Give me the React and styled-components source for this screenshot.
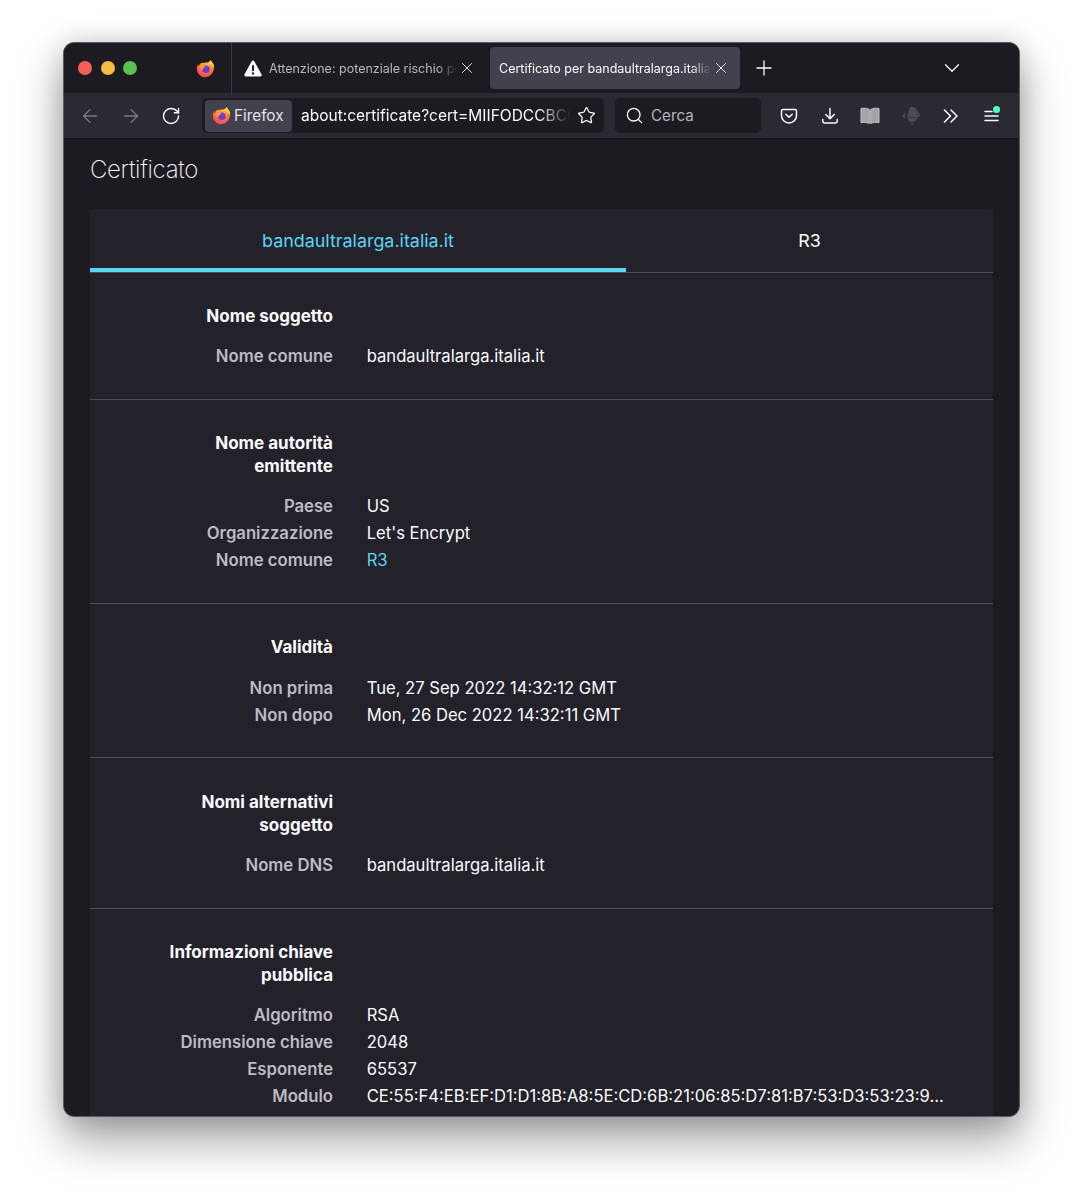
import { ArrowLeft, ArrowRight, RotateCw, X, Plus, ChevronDown, Star, Search } from 'lucide-react';
import styled, { createGlobalStyle } from 'styled-components';

const GlobalStyle = createGlobalStyle`
    html, body {
        margin: 0;
        background: #fff;
    }
    body {
        font-family: Inter, "Noto Sans", "Liberation Sans", sans-serif;
        -webkit-font-smoothing: antialiased;
    }
`;

const Page = styled.div`
    height: 1200px;
    padding: 42px 63px 0;
    box-sizing: border-box;
    overflow: hidden;
`;

const Window = styled.div`
    width: 957px;
    height: 1075px;
    box-sizing: border-box;
    display: flex;
    flex-direction: column;
    overflow: hidden;
    background: #1c1b22;
    border: 1px solid #5c5c60;
    border-radius: 11px;
    box-shadow: 0 22px 46px rgba(0, 0, 0, 0.38), 0 0 26px rgba(0, 0, 0, 0.14);
`;

const TabStrip = styled.div`
    height: 50px;
    flex: none;
    display: flex;
    align-items: center;
    background: #1c1b22;
`;

const Lights = styled.div`
    width: 132px;
    flex: none;
    display: flex;
    gap: 8.5px;
    padding-left: 14px;
    box-sizing: border-box;
    align-items: center;
`;

const Light = styled.span`
    width: 14px;
    height: 14px;
    border-radius: 50%;
    background: ${(p) => p.$color};
`;

const StripLogo = styled.div`
    width: 35px;
    flex: none;
    display: flex;
    align-items: center;
`;

const Divider = styled.div`
    width: 1px;
    height: 50px;
    flex: none;
    background: #3e3d45;
`;

const Tab = styled.div`
    width: ${(p) => (p.$active ? '250px' : '249px')};
    height: 42px;
    flex: none;
    display: flex;
    align-items: center;
    box-sizing: border-box;
    padding: ${(p) => (p.$active ? '0 10px 0 9px' : '0 5px 0 12px')};
    margin-left: ${(p) => (p.$active ? '9px' : '0')};
    border-radius: 4px;
    font-size: 12.5px;
    color: ${(p) => (p.$active ? '#fbfbfe' : '#b8b8bd')};
    background: ${(p) => (p.$active ? '#42414d' : 'transparent')};
`;

const TabText = styled.span`
    flex: 1;
    min-width: 0;
    white-space: nowrap;
    overflow: hidden;
    margin-left: ${(p) => (p.$indented ? '7px' : '0')};
    mask-image: linear-gradient(to left, transparent 0, #000 20px);
`;

const TabClose = styled(X)`
    width: 18px;
    height: 18px;
    flex: none;
    margin-left: 1px;
    color: #e8e8ec;
`;

const StripButton = styled.div`
    flex: none;
    display: flex;
    align-items: center;
    color: #fbfbfe;
    margin-left: ${(p) => p.$left}px;
`;

const Toolbar = styled.div`
    height: 46px;
    flex: none;
    display: flex;
    align-items: center;
    box-sizing: border-box;
    background: #2b2a33;
    border-bottom: 1px solid #111014;
`;

const NavIcons = styled.div`
    width: 138px;
    flex: none;
    display: flex;
    align-items: center;
    gap: 19px;
    padding-left: 15px;
    box-sizing: border-box;
`;

const NavButton = styled.div`
    display: flex;
    color: ${(p) => (p.$dim ? '#7c7c84' : '#fbfbfe')};
`;

const UrlBar = styled.div`
    width: 402px;
    height: 35px;
    flex: none;
    display: flex;
    align-items: center;
    box-sizing: border-box;
    padding: 0 8px 0 3px;
    background: #1c1b22;
    border-radius: 5px;
`;

const Identity = styled.div`
    width: 87px;
    height: 32px;
    flex: none;
    display: flex;
    align-items: center;
    gap: 3px;
    box-sizing: border-box;
    padding-left: 7px;
    background: #42414d;
    border-radius: 4px;
    font-size: 15.3px;
    color: #e4e4e8;
`;

const UrlText = styled.div`
    flex: 1;
    min-width: 0;
    margin: 0 6px 0 9px;
    white-space: nowrap;
    overflow: hidden;
    font-size: 15.5px;
    color: #fbfbfe;
    mask-image: linear-gradient(to left, transparent 0, #000 34px);
`;

const SearchBox = styled.div`
    width: 146px;
    height: 35px;
    flex: none;
    display: flex;
    align-items: center;
    gap: 7px;
    box-sizing: border-box;
    margin-left: 11px;
    padding-left: 10px;
    background: #1c1b22;
    border-radius: 5px;
    font-size: 15.2px;
    color: #b4b4b9;
`;

const ToolIcons = styled.div`
    flex: 1;
    display: flex;
    align-items: center;
    padding-left: 7.7px;
    color: #fbfbfe;
`;

const ToolSlot = styled.div`
    position: relative;
    width: 40.6px;
    flex: none;
    display: flex;
    justify-content: center;
`;

const Badge = styled.span`
    position: absolute;
    top: -3px;
    right: 12px;
    width: 7px;
    height: 7px;
    border-radius: 50%;
    background: #54ffbd;
`;

const Content = styled.div`
    flex: 1;
    min-height: 0;
    overflow: hidden;
    padding: 0 26px;
`;

const Title = styled.h1`
    margin: 0;
    padding: 14px 0 22px;
    font-size: 24px;
    line-height: 34px;
    font-weight: 200;
    letter-spacing: -0.3px;
    color: #fbfbfe;
`;

const Card = styled.div`
    background: #23222b;
    border-radius: 4px 4px 0 0;
`;

const CertTabs = styled.div`
    display: flex;
    height: 63.5px;
    border-bottom: 1px solid #4e4d55;
    box-sizing: border-box;
`;

const CertTab = styled.div`
    flex: ${(p) => (p.$active ? '0 0 536px' : '1')};
    height: ${(p) => (p.$active ? '63px' : '59px')};
    display: flex;
    align-items: center;
    justify-content: center;
    padding-top: 4px;
    box-sizing: border-box;
    font-size: 17.9px;
    color: ${(p) => (p.$active ? '#5cd4f2' : '#fbfbfe')};
    border-bottom: ${(p) => (p.$active ? '4px solid #5cd4f2' : 'none')};
`;

const Section = styled.section`
    padding: 32.2px 0 28.6px;
    border-bottom: 1px solid #4e4d55;
    &:last-child {
        border-bottom: none;
    }
`;

const Heading = styled.div`
    width: 243px;
    margin-bottom: 15.5px;
    text-align: right;
    font-size: 17px;
    line-height: 23px;
    font-weight: 700;
    color: #fbfbfe;
`;

const Row = styled.div`
    display: grid;
    grid-template-columns: 243px 1fr;
    column-gap: 33.7px;
    line-height: 27px;
`;

const Label = styled.div`
    text-align: right;
    font-size: 16.7px;
    font-weight: 600;
    color: #bcbcc3;
`;

const Value = styled.div`
    white-space: nowrap;
    font-size: 16.6px;
    color: ${(p) => (p.$link ? '#5cd4f2' : '#fbfbfe')};
`;

const FirefoxLogo = ({ size = 19 }) => (
    <svg width={size} height={size} viewBox="0 0 24 24" style={{ flex: 'none' }}>
        <defs>
            <radialGradient id="ffBody" cx="0.6" cy="0.25" r="0.9">
                <stop offset="0" stopColor="#ffc23a" />
                <stop offset="0.5" stopColor="#ff7139" />
                <stop offset="1" stopColor="#e5356f" />
            </radialGradient>
        </defs>
        <path d="M18.500 1c.6 2.200 3.600 5 4.200 8.600.7 6.400-4 13.400-10.900 13.400C5.800 23 1 18.200 1 12.200c0-2 .5-4 1.600-5.700.2 1 .6 1.700 1.200 2.200C4.500 6 6.500 4.600 8.500 4.700 10.800 4.800 17 5 18.500 1z" fill="url(#ffBody)" />
        <path d="M18.500 1c-.3 2.500-2 3.500-3.600 4.600 3.500.3 6 2.500 6.700 6 .5-1 1.100-2.300 1.100-3C22.200 5.500 19.200 3.500 18.500 1z" fill="#ffd43a" />
        <circle cx="12.500" cy="13" r="4.800" fill="#6a3fd0" />
        <path d="M4 9c2-2.800 5-3.300 7.500-2.800-1.700.6-3 1.400-3.300 2.800 1.500-.2 3 .1 3.800 1.300-2.200 0-3.800 1.200-3.400 3.400-2.200-.5-4.200-2-4.600-4.700z" fill="#ff9a2e" />
    </svg>
);

const WarningIcon = () => (
    <svg width="18" height="17" viewBox="0 0 18 17" style={{ flex: 'none' }}>
        <path d="M9 .6c.6 0 1.100.3 1.400.8l7.100 12.800c.6 1.100-.1 2.300-1.300 2.300H1.800C.6 16.500-.1 15.300.5 14.200L7.600 1.400C7.900.9 8.400.6 9 .6z" fill="#fbfbfe" />
        <rect x="8" y="5" width="2" height="6.200" rx="1" fill="#1c1b22" />
        <circle cx="9" cy="13.400" r="1.200" fill="#1c1b22" />
    </svg>
);

const PocketIcon = () => (
    <svg width="18" height="18" viewBox="0 0 18 18" fill="none" stroke="currentColor" strokeWidth="1.500" strokeLinecap="round" strokeLinejoin="round">
        <path d="M3 2.500h12c.9 0 1.500.6 1.500 1.500v4.500a7.500 7.500 0 0 1-15 0V4c0-.9.6-1.500 1.500-1.500z" />
        <path d="M5.800 7.200 9 10.200l3.200-3" />
    </svg>
);

const DownloadIcon = () => (
    <svg width="18" height="18" viewBox="0 0 18 18" fill="none" stroke="currentColor" strokeWidth="1.500" strokeLinecap="round" strokeLinejoin="round">
        <path d="M9 1.500v10M4.800 7.500 9 11.700l4.200-4.200" />
        <path d="M1.800 12.500v1.800c0 1 .7 1.700 1.700 1.700h11c1 0 1.700-.7 1.700-1.700v-1.800" />
    </svg>
);

const ReaderIcon = () => (
    <svg width="20" height="18" viewBox="0 0 20 18">
        <path d="M1 1.500c3-.6 6-.4 8.300 1v14c-2.300-1.200-5.300-1.400-8.300-.8z" fill="#a4a4a8" stroke="#c4c4c8" strokeWidth="1" strokeLinejoin="round" />
        <path d="M19 1.500c-3-.6-6-.4-8.300 1v14c2.300-1.200 5.300-1.400 8.300-.8z" fill="#a4a4a8" stroke="#c4c4c8" strokeWidth="1" strokeLinejoin="round" />
    </svg>
);

const ExtensionIcon = () => (
    <svg width="20" height="20" viewBox="0 0 20 20" fill="#4c4c52">
        <path d="M9 1h4.500L19 9l-1 2.500H6z" />
        <path d="M6.500 12H17l-3.500 3.500H8z" />
        <path d="M4.500 6.500 1 10l3 3z" />
        <path d="M9.500 16.500h3.500L11 19z" />
    </svg>
);

const DoubleChevronIcon = () => (
    <svg width="16" height="14" viewBox="0 0 16 14" fill="none" stroke="currentColor" strokeWidth="1.500" strokeLinecap="round" strokeLinejoin="round">
        <path d="M1.500 1 7.500 7l-6 6M8 1l6 6-6 6" />
    </svg>
);

const MenuIcon = () => (
    <svg width="15" height="14" viewBox="0 0 15 14" fill="none" stroke="currentColor" strokeWidth="1.500" strokeLinecap="round">
        <path d="M1 2.500h7M1 7h13M1 11.500h13" />
    </svg>
);

const App = () => {
    return (
        <Page>
            <GlobalStyle />
            <Window>
                <TabStrip>
                    <Lights>
                        <Light $color="#f25f58" />
                        <Light $color="#f8bd3f" />
                        <Light $color="#57c353" />
                    </Lights>
                    <StripLogo><FirefoxLogo /></StripLogo>
                    <Divider />
                    <Tab>
                        <WarningIcon />
                        <TabText $indented>Attenzione: potenziale rischio per</TabText>
                        <TabClose strokeWidth={1.3} />
                    </Tab>
                    <Tab $active>
                        <TabText>Certificato per bandaultralarga.italia.it</TabText>
                        <TabClose strokeWidth={1.3} />
                    </Tab>
                    <StripButton $left={12}><Plus size={24} strokeWidth={1.3} /></StripButton>
                    <StripButton $left={163}><ChevronDown size={26} strokeWidth={1.2} /></StripButton>
                </TabStrip>
                <Toolbar>
                    <NavIcons>
                        <NavButton $dim><ArrowLeft size={22} strokeWidth={1.4} /></NavButton>
                        <NavButton $dim><ArrowRight size={22} strokeWidth={1.4} /></NavButton>
                        <NavButton><RotateCw size={20} strokeWidth={1.7} /></NavButton>
                    </NavIcons>
                    <UrlBar>
                        <Identity><FirefoxLogo />Firefox</Identity>
                        <UrlText>about:certificate?cert=MIIFODCCBCCg</UrlText>
                        <Star size={19} strokeWidth={1.6} color="#fbfbfe" />
                    </UrlBar>
                    <SearchBox><Search size={19} strokeWidth={1.7} color="#fbfbfe" />Cerca</SearchBox>
                    <ToolIcons>
                        <ToolSlot><PocketIcon /></ToolSlot>
                        <ToolSlot><DownloadIcon /></ToolSlot>
                        <ToolSlot><ReaderIcon /></ToolSlot>
                        <ToolSlot><ExtensionIcon /></ToolSlot>
                        <ToolSlot><DoubleChevronIcon /></ToolSlot>
                        <ToolSlot><MenuIcon /><Badge /></ToolSlot>
                    </ToolIcons>
                </Toolbar>
                <Content>
                    <Title>Certificato</Title>
                    <Card>
                        <CertTabs>
                            <CertTab $active>bandaultralarga.italia.it</CertTab>
                            <CertTab>R3</CertTab>
                        </CertTabs>
                        <Section>
                            <Heading>Nome soggetto</Heading>
                            <Row><Label>Nome comune</Label><Value>bandaultralarga.italia.it</Value></Row>
                        </Section>
                        <Section>
                            <Heading>Nome autorità<br />emittente</Heading>
                            <Row><Label>Paese</Label><Value>US</Value></Row>
                            <Row><Label>Organizzazione</Label><Value>Let's Encrypt</Value></Row>
                            <Row><Label>Nome comune</Label><Value $link>R3</Value></Row>
                        </Section>
                        <Section>
                            <Heading>Validità</Heading>
                            <Row><Label>Non prima</Label><Value>Tue, 27 Sep 2022 14:32:12 GMT</Value></Row>
                            <Row><Label>Non dopo</Label><Value>Mon, 26 Dec 2022 14:32:11 GMT</Value></Row>
                        </Section>
                        <Section>
                            <Heading>Nomi alternativi<br />soggetto</Heading>
                            <Row><Label>Nome DNS</Label><Value>bandaultralarga.italia.it</Value></Row>
                        </Section>
                        <Section>
                            <Heading>Informazioni chiave<br />pubblica</Heading>
                            <Row><Label>Algoritmo</Label><Value>RSA</Value></Row>
                            <Row><Label>Dimensione chiave</Label><Value>2048</Value></Row>
                            <Row><Label>Esponente</Label><Value>65537</Value></Row>
                            <Row><Label>Modulo</Label><Value>CE:55:F4:EB:EF:D1:D1:8B:A8:5E:CD:6B:21:06:85:D7:81:B7:53:D3:53:23:9...</Value></Row>
                        </Section>
                    </Card>
                </Content>
            </Window>
        </Page>
    );
};

export default App;
